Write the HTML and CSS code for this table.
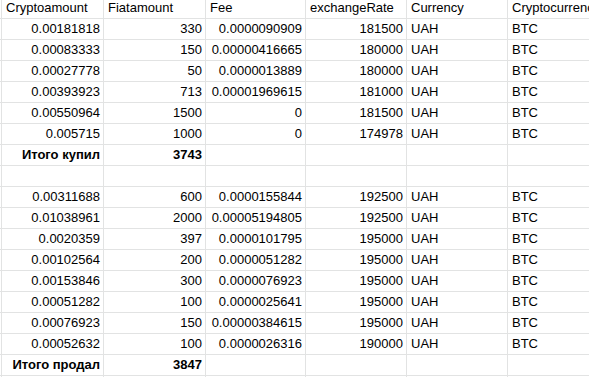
FILE: index.html
```html
<!DOCTYPE html>
<html>
<head>
<meta charset="utf-8">
<link rel="stylesheet" href="styles.css">
</head>
<body>
<div class="frame">
<div class="sheet">
  <div class="c"></div><div class="c">Cryptoamount</div><div class="c">Fiatamount</div><div class="c">Fee</div><div class="c">exchangeRate</div><div class="c">Currency</div><div class="c">Cryptocurrency</div>

  <div class="c"></div><div class="c n">0.00181818</div><div class="c n">330</div><div class="c n">0.0000090909</div><div class="c n">181500</div><div class="c">UAH</div><div class="c">BTC</div>
  <div class="c"></div><div class="c n">0.00083333</div><div class="c n">150</div><div class="c n">0.00000416665</div><div class="c n">180000</div><div class="c">UAH</div><div class="c">BTC</div>
  <div class="c"></div><div class="c n">0.00027778</div><div class="c n">50</div><div class="c n">0.0000013889</div><div class="c n">180000</div><div class="c">UAH</div><div class="c">BTC</div>
  <div class="c"></div><div class="c n">0.00393923</div><div class="c n">713</div><div class="c n">0.00001969615</div><div class="c n">181000</div><div class="c">UAH</div><div class="c">BTC</div>
  <div class="c"></div><div class="c n">0.00550964</div><div class="c n">1500</div><div class="c n">0</div><div class="c n">181500</div><div class="c">UAH</div><div class="c">BTC</div>
  <div class="c"></div><div class="c n">0.005715</div><div class="c n">1000</div><div class="c n">0</div><div class="c n">174978</div><div class="c">UAH</div><div class="c">BTC</div>
  <div class="c"></div><div class="c n b">Итого купил</div><div class="c n b">3743</div><div class="c"></div><div class="c"></div><div class="c"></div><div class="c"></div>
  <div class="c"></div><div class="c"></div><div class="c"></div><div class="c"></div><div class="c"></div><div class="c"></div><div class="c"></div>

  <div class="c"></div><div class="c n">0.00311688</div><div class="c n">600</div><div class="c n">0.0000155844</div><div class="c n">192500</div><div class="c">UAH</div><div class="c">BTC</div>
  <div class="c"></div><div class="c n">0.01038961</div><div class="c n">2000</div><div class="c n">0.00005194805</div><div class="c n">192500</div><div class="c">UAH</div><div class="c">BTC</div>
  <div class="c"></div><div class="c n">0.0020359</div><div class="c n">397</div><div class="c n">0.0000101795</div><div class="c n">195000</div><div class="c">UAH</div><div class="c">BTC</div>
  <div class="c"></div><div class="c n">0.00102564</div><div class="c n">200</div><div class="c n">0.0000051282</div><div class="c n">195000</div><div class="c">UAH</div><div class="c">BTC</div>
  <div class="c"></div><div class="c n">0.00153846</div><div class="c n">300</div><div class="c n">0.0000076923</div><div class="c n">195000</div><div class="c">UAH</div><div class="c">BTC</div>
  <div class="c"></div><div class="c n">0.00051282</div><div class="c n">100</div><div class="c n">0.0000025641</div><div class="c n">195000</div><div class="c">UAH</div><div class="c">BTC</div>
  <div class="c"></div><div class="c n">0.00076923</div><div class="c n">150</div><div class="c n">0.00000384615</div><div class="c n">195000</div><div class="c">UAH</div><div class="c">BTC</div>
  <div class="c"></div><div class="c n">0.00052632</div><div class="c n">100</div><div class="c n">0.0000026316</div><div class="c n">190000</div><div class="c">UAH</div><div class="c">BTC</div>
  <div class="c"></div><div class="c n b">Итого продал</div><div class="c n b">3847</div><div class="c"></div><div class="c"></div><div class="c"></div><div class="c"></div>
  <div class="c"></div><div class="c"></div><div class="c"></div><div class="c"></div><div class="c"></div><div class="c"></div><div class="c"></div>
</div>
</div>
</body>
</html>
```
FILE: styles.css
```css
html, body {
  margin: 0;
  padding: 0;
  background: #ffffff;
  overflow: hidden;
}
body {
  font-family: "Liberation Sans", Arial, sans-serif;
  font-size: 13px;
  color: #000000;
}
.frame {
  width: 589px;
  height: 377px;
  overflow: hidden;
}
.sheet {
  display: grid;
  grid-template-columns: 1px 101px 101px 99px 100px 100px 81px;
  grid-auto-rows: 20px;
  gap: 1px;
  background: #e2e3e3;
  margin-top: -2px;
  width: 589px;
}
.c {
  background: #ffffff;
  display: flex;
  align-items: center;
  padding: 0 3px 0 4px;
  white-space: nowrap;
  overflow: hidden;
  line-height: 20px;
}
.c:nth-child(7n+1) {
  padding: 0;
}
.n {
  justify-content: flex-end;
}
.b {
  font-weight: bold;
}
```
